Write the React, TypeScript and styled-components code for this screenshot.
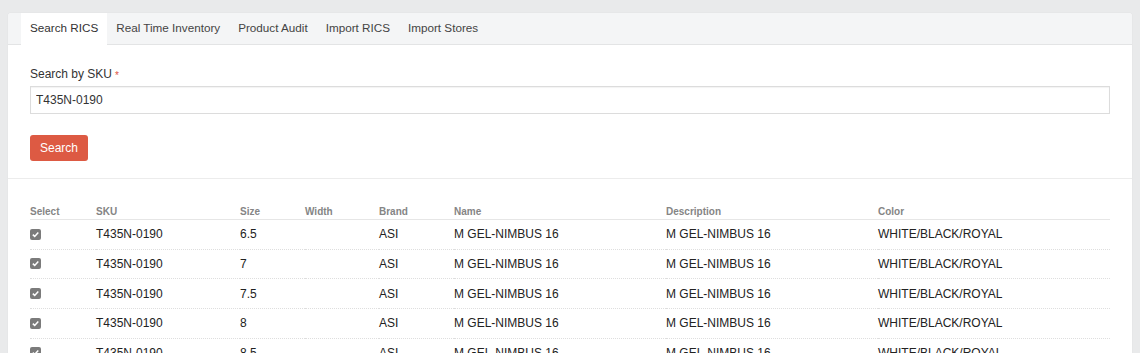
import React from "react";
import styled, { createGlobalStyle } from "styled-components";

const GlobalStyle = createGlobalStyle`
  html, body {
    margin: 0;
    padding: 0;
    background: #e9eaeb;
    font-family: "Liberation Sans", Arial, sans-serif;
    color: #333;
  }
`;

const tabs = ["Search RICS", "Real Time Inventory", "Product Audit", "Import RICS", "Import Stores"];
const sizes = ["6.5", "7", "7.5", "8", "8.5"];

export default function App() {
  return (
    <>
      <GlobalStyle />
      <Page>
        <Card>
          <TabBar>
            {tabs.map((t, i) => (
              <Tab key={t} active={i === 0}>
                {t}
              </Tab>
            ))}
          </TabBar>

          <FormSection>
            <Label>
              Search by SKU<Required>*</Required>
            </Label>
            <Input defaultValue="T435N-0190" />
            <SearchButton>Search</SearchButton>
          </FormSection>

          <TableSection>
            <Table>
              <colgroup>
                <col style={{ width: 66 }} />
                <col style={{ width: 144 }} />
                <col style={{ width: 65 }} />
                <col style={{ width: 74 }} />
                <col style={{ width: 75 }} />
                <col style={{ width: 212 }} />
                <col style={{ width: 212 }} />
                <col />
              </colgroup>
              <thead>
                <tr>
                  <Th>Select</Th>
                  <Th>SKU</Th>
                  <Th>Size</Th>
                  <Th>Width</Th>
                  <Th>Brand</Th>
                  <Th>Name</Th>
                  <Th>Description</Th>
                  <Th>Color</Th>
                </tr>
              </thead>
              <tbody>
                {sizes.map((s) => (
                  <Row key={s}>
                    <Td>
                      <Check>
                        <svg width="9" height="9" viewBox="0 0 9 9">
                          <path d="M1.8 4.6 L3.7 6.4 L7.3 2.4" fill="none" stroke="#fff" strokeWidth="1.5" />
                        </svg>
                      </Check>
                    </Td>
                    <Td>T435N-0190</Td>
                    <Td>{s}</Td>
                    <Td></Td>
                    <Td>ASI</Td>
                    <Td>M GEL-NIMBUS 16</Td>
                    <Td>M GEL-NIMBUS 16</Td>
                    <Td>WHITE/BLACK/ROYAL</Td>
                  </Row>
                ))}
              </tbody>
            </Table>
          </TableSection>
        </Card>
      </Page>
    </>
  );
}

const Page = styled.div`
  padding: 13px 8px 0 8px;
  height: 353px;
  box-sizing: border-box;
  overflow: hidden;
`;

const Card = styled.div`
  background: #fff;
  border-radius: 3px 3px 0 0;
  box-shadow: 0 0 1px rgba(0, 0, 0, 0.15);
  min-height: 400px;
`;

const TabBar = styled.div`
  display: flex;
  background: #f4f5f6;
  border-bottom: 1px solid #e3e4e5;
  padding-left: 13px;
  height: 31px;
  border-radius: 3px 3px 0 0;
`;

const Tab = styled.div<{ active?: boolean }>`
  padding: 0 9px;
  font-size: 11.7px;
  line-height: 29px;
  height: ${(p) => (p.active ? "32px" : "31px")};
  color: ${(p) => (p.active ? "#333" : "#444")};
  background: ${(p) => (p.active ? "#fff" : "transparent")};
  white-space: nowrap;
`;

const FormSection = styled.div`
  padding: 22px 22px 17px 22px;
  border-bottom: 1px solid #ececec;
`;

const Label = styled.div`
  font-size: 12px;
  line-height: 15px;
  margin-bottom: 4px;
`;

const Required = styled.span`
  color: #e0553f;
  font-size: 10px;
  margin-left: 3px;
  position: relative;
  top: 1px;
`;

const Input = styled.input`
  display: block;
  width: 100%;
  box-sizing: border-box;
  height: 28px;
  border: 1px solid #dcdcdc;
  box-shadow: inset 0 1px 1px rgba(0, 0, 0, 0.05);
  padding: 0 5px;
  font-family: "Liberation Sans", Arial, sans-serif;
  font-size: 12px;
  color: #333;
  outline: none;
`;

const SearchButton = styled.button`
  display: block;
  margin-top: 21px;
  height: 26px;
  width: 58px;
  padding: 0;
  border: none;
  border-radius: 3px;
  background: #dd5a43;
  color: #fff;
  font-family: "Liberation Sans", Arial, sans-serif;
  font-size: 12px;
`;

const TableSection = styled.div`
  padding: 25px 22px 0 22px;
`;

const Table = styled.table`
  width: 100%;
  border-collapse: collapse;
  table-layout: fixed;
`;

const Th = styled.th`
  text-align: left;
  font-size: 10px;
  font-weight: bold;
  color: #858585;
  padding: 1px 0 1px 0;
  height: 13px;
  border-bottom: 1px solid #e6e6e6;
`;

const Row = styled.tr`
  border-bottom: 1px dotted #dedede;
`;

const Td = styled.td`
  font-size: 12px;
  height: 28.7px;
  padding: 0;
  vertical-align: middle;
  color: #222;
  white-space: nowrap;
`;

const Check = styled.span`
  display: inline-flex;
  align-items: center;
  justify-content: center;
  width: 11px;
  height: 11px;
  border-radius: 2px;
  background: #7b7b7b;
  vertical-align: middle;
  position: relative;
  top: -1px;
`;
